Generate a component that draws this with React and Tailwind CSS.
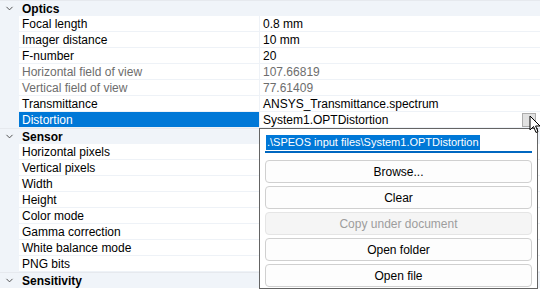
import { ChevronDown } from "lucide-react";

const sections = [
  {
    title: "Optics",
    rows: [
      ["Focal length", "0.8 mm"],
      ["Imager distance", "10 mm"],
      ["F-number", "20"],
      ["Horizontal field of view", "107.66819", true],
      ["Vertical field of view", "77.61409", true],
      ["Transmittance", "ANSYS_Transmittance.spectrum"],
      ["Distortion", "System1.OPTDistortion", false, true],
    ],
  },
  {
    title: "Sensor",
    rows: [
      ["Horizontal pixels", ""],
      ["Vertical pixels", ""],
      ["Width", ""],
      ["Height", ""],
      ["Color mode", ""],
      ["Gamma correction", ""],
      ["White balance mode", ""],
      ["PNG bits", ""],
    ],
  },
  { title: "Sensitivity", rows: [] },
];

function Category({ title }) {
  return (
    <div className="flex h-4 items-center bg-[#f0f4f9] border-t border-[#e6e9ee]">
      <div className="w-[19px] flex justify-center">
        <ChevronDown size={11} strokeWidth={2} className="text-[#444]" />
      </div>
      <span className="pl-[3px] font-bold text-black">{title}</span>
    </div>
  );
}

function Row({ name, value, readonly, selected }) {
  return (
    <div className="flex h-4">
      <div className="w-[19px] bg-[#f0f4f9]" />
      <div
        className={`w-[240px] pl-[3px] leading-4 border-b border-[#eef2f7] ${
          selected ? "bg-[#0078d7] text-white" : readonly ? "text-[#6d6d6d]" : "text-black"
        }`}
      >
        {name}
      </div>
      <div
        className={`flex-1 flex border-l border-[#eef2f7] pl-[3px] leading-4 border-b ${
          readonly ? "text-[#6d6d6d]" : "text-black"
        }`}
      >
        <span className="flex-1">{value}</span>
        {selected && (
          <div className="mr-[4px] mt-[1px] h-[14px] w-[14px] bg-[#e1e1e1] border border-[#adadad]" />
        )}
      </div>
    </div>
  );
}

function Btn({ children, disabled }) {
  return (
    <div
      className={`h-[23px] rounded-[4px] border flex items-center justify-center ${
        disabled
          ? "border-[#e5e5e5] bg-[#f5f5f5] text-[#9d9d9d]"
          : "border-[#d0d0d0] bg-[#fdfdfd] text-black"
      }`}
    >
      {children}
    </div>
  );
}

export default function App() {
  return (
    <div
      className="relative w-[540px] h-[291px] overflow-hidden bg-white text-[12px]"
      style={{ fontFamily: '"Liberation Sans", Arial, sans-serif' }}
    >
      {sections.map((s) => (
        <div key={s.title}>
          <Category title={s.title} />
          {s.rows.map(([n, v, ro, sel]) => (
            <Row key={n} name={n} value={v} readonly={ro} selected={sel} />
          ))}
        </div>
      ))}

      {/* dropdown editor */}
      <div className="absolute left-[259px] top-[128px] w-[279px] h-[161px] bg-white border border-[#646464] px-[5px] pt-[4px] flex flex-col gap-[3px]">
        <div className="h-[20px] border-b-2 border-[#0067c0] flex items-center px-[1px]">
          <span className="bg-[#0078d7] text-white text-[11px] leading-[15px] px-[1px]">
            .\SPEOS input files\System1.OPTDistortion
          </span>
        </div>
        <div className="flex flex-col gap-[3px] mt-[4px]">
          <Btn>Browse...</Btn>
          <Btn>Clear</Btn>
          <Btn disabled>Copy under document</Btn>
          <Btn>Open folder</Btn>
          <Btn>Open file</Btn>
        </div>
      </div>

      {/* mouse cursor */}
      <svg className="absolute left-[529px] top-[115px]" width="12" height="20" viewBox="0 0 12 20">
        <path d="M1 1 L1 15 L4.5 11.5 L7 17.5 L9 16.6 L6.6 11 L11 11 Z" fill="white" stroke="black" strokeWidth="1" />
      </svg>
    </div>
  );
}
